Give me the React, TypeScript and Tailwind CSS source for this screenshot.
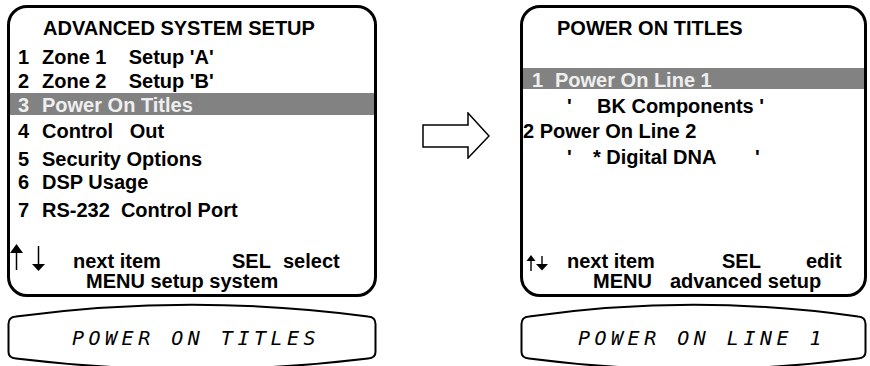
export default function App() {
  return (
    <div className="w-[870px] h-[366px] bg-white flex pt-[5px] pl-[7px] overflow-hidden font-['Liberation_Sans',Arial,sans-serif] font-bold text-[20px] text-black">
      {/* Left: advanced system setup */}
      <div className="w-[370px] flex flex-col">
        <div className="h-[292px] rounded-[20px] border-[3px] border-black flex flex-col pt-[8px]">
          <div className="h-[29px] leading-[24px] pl-[33px]">ADVANCED SYSTEM SETUP</div>
          <MenuRow n="1" text="Zone 1    Setup 'A'" h="h-[24px]" />
          <MenuRow n="2" text="Zone 2    Setup 'B'" h="h-[24px]" />
          <div className="h-[22px] bg-[#828282] text-[#efefef]">
            <div className="flex pl-[8px] leading-[22px] pt-[1px] whitespace-pre">
              <span className="w-[24px]">3</span>
              <span>Power On Titles</span>
            </div>
          </div>
          <div className="h-[4px]" />
          <MenuRow n="4" text="Control   Out" h="h-[28px]" />
          <MenuRow n="5" text="Security Options" h="h-[23px]" />
          <MenuRow n="6" text="DSP Usage" h="h-[28px]" />
          <MenuRow n="7" text="RS-232  Control Port" h="h-[24px]" />

          <div className="mt-auto pb-[3px]">
            <div className="h-[19px] leading-[19px] flex">
              <span className="w-[63px]">
                <svg width="36" height="28" viewBox="0 0 36 28" className="-mt-[8px]">
                  <line x1="6.5" y1="5" x2="6.5" y2="26" stroke="black" strokeWidth="1.5" />
                  <polygon points="0,9 6.5,0 13,9" fill="black" />
                  <line x1="28.5" y1="2" x2="28.5" y2="22" stroke="black" strokeWidth="1.5" />
                  <polygon points="22,20 35,20 28.5,27" fill="black" />
                </svg>
              </span>
              <span className="w-[159px]">next item</span>
              <span className="w-[51px]">SEL</span>
              <span>select</span>
            </div>
            <div className="h-[20px] leading-[20px] pl-[76px]">MENU setup system</div>
          </div>
        </div>
        <LcdBox width={370} text="POWER ON TITLES" pad="pl-[65px]" />
      </div>

      {/* Middle: arrow */}
      <div className="w-[143px] pl-[45px] pt-[107px]">
        <svg width="68" height="47" viewBox="0 0 68 47">
          <path d="M1 13 H46 V1 L67 24 L46 46 V35 H1 Z" fill="white" stroke="black" strokeWidth="1.5" strokeLinejoin="miter" />
        </svg>
      </div>

      {/* Right: power on titles */}
      <div className="w-[347px] flex flex-col">
        <div className="h-[292px] rounded-[20px] border-[3px] border-black flex flex-col pt-[8px]">
          <div className="h-[52px] leading-[24px] pl-[34px]">POWER ON TITLES</div>
          <div className="h-[21px] bg-[#828282] text-[#efefef]">
            <div className="flex pl-[9px] leading-[22px] pt-[1px]">
              <span className="w-[23px]">1</span>
              <span>Power On Line 1</span>
            </div>
          </div>
          <div className="mt-[5px] h-[25px] leading-[24px] flex pl-[44px]">
            <span className="w-[30px]">'</span>
            <span>BK Components '</span>
          </div>
          <div className="h-[26px] leading-[24px]">2 Power On Line 2</div>
          <div className="h-[24px] leading-[24px] flex pl-[44px]">
            <span className="w-[26px]">'</span>
            <span className="w-[162px]">* Digital DNA</span>
            <span>'</span>
          </div>

          <div className="mt-auto pb-[3px]">
            <div className="h-[19px] leading-[19px] flex pl-[1px]">
              <span className="w-[43px]">
                <svg width="24" height="16" viewBox="0 0 24 16" className="mt-[3px] ml-[2px]">
                  <line x1="5" y1="4" x2="5" y2="16" stroke="black" strokeWidth="1.4" />
                  <polygon points="0.5,6 5,0 9.5,6" fill="black" />
                  <line x1="16" y1="1" x2="16" y2="10" stroke="black" strokeWidth="1.4" />
                  <polygon points="10,9 22,9 16,15.5" fill="black" />
                </svg>
              </span>
              <span className="w-[155px]">next item</span>
              <span className="w-[84px]">SEL</span>
              <span>edit</span>
            </div>
            <div className="h-[20px] leading-[20px] flex pl-[70px]">
              <span className="w-[77px]">MENU</span>
              <span>advanced setup</span>
            </div>
          </div>
        </div>
        <LcdBox width={347} text="POWER ON LINE 1" pad="pl-[58px]" />
      </div>
    </div>
  );
}

function MenuRow({ n, text, h }: { n: string; text: string; h: string }) {
  return (
    <div className={`${h} leading-[24px] flex pl-[8px] whitespace-pre`}>
      <span className="w-[24px]">{n}</span>
      <span>{text}</span>
    </div>
  );
}

function LcdBox({ width, text, pad }: { width: number; text: string; pad: string }) {
  const r = width - 1.5;
  const mid = width / 2;
  const d = `M1.5 24 Q1.5 17 9 16.5 Q${mid} -7 ${width - 9} 16.5 Q${r} 17 ${r} 24 L${r} 52 Q${r} 58 ${width - 9} 58.5 Q${mid} 80 9 58.5 Q1.5 58 1.5 52 Z`;
  return (
    <div className="relative mt-[3px] h-[66px]" style={{ width }}>
      <svg className="absolute inset-0" width={width} height="66" viewBox={`0 0 ${width} 66`}>
        <path d={d} fill="white" stroke="black" strokeWidth="2" />
      </svg>
      <div
        className={`relative ${pad} pt-[28px] leading-[20px] text-[20px] font-normal italic tracking-[4.5px] whitespace-pre font-['DejaVu_Sans_Mono',monospace]`}
      >
        {text}
      </div>
    </div>
  );
}
